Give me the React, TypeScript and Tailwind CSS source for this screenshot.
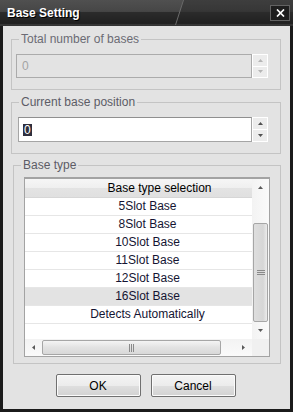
import React from 'react';

type Dir = 'up' | 'down' | 'left' | 'right';

const Tri: React.FC<{ dir: Dir; color: string }> = ({ dir, color }) => {
  const horiz = dir === 'up' || dir === 'down';
  const pts = {
    up: '0,3 2.5,0 5,3',
    down: '0,0 5,0 2.5,3',
    left: '3,0 3,5 0,2.5',
    right: '0,0 0,5 3,2.5',
  }[dir];
  return (
    <svg width={horiz ? 5 : 3} height={horiz ? 3 : 5} viewBox={horiz ? '0 0 5 3' : '0 0 3 5'}>
      <polygon points={pts} fill={color} />
    </svg>
  );
};

const Spin: React.FC<{ color: string; h: string }> = ({ color, h }) => (
  <div className={`flex w-[16px] flex-col border border-white bg-[#ececec] ${h}`}>
    <div className="flex flex-1 items-center justify-center border-b border-white">
      <Tri dir="up" color={color} />
    </div>
    <div className="flex flex-1 items-center justify-center">
      <Tri dir="down" color={color} />
    </div>
  </div>
);

const Btn: React.FC<{ label: string }> = ({ label }) => (
  <button className="h-[23px] w-[85px] rounded-[2px] border border-[#707070] bg-[linear-gradient(to_bottom,#f4f4f4_0%,#ececec_50%,#dfdfdf_51%,#d2d2d2_100%)] text-[12px] leading-none text-black shadow-[inset_0_0_0_1px_#fbfbfb]">
    {label}
  </button>
);

const rows = ['5Slot Base', '8Slot Base', '10Slot Base', '11Slot Base', '12Slot Base', '16Slot Base', 'Detects Automatically'];

const App: React.FC = () => {
  return (
    <div className="flex h-[412px] w-[293px] flex-col bg-[#1b1b1b] font-['Liberation_Sans',Arial,sans-serif] text-[12px]">
      {/* title bar */}
      <div className="relative flex h-[26px] items-start justify-between bg-[linear-gradient(to_bottom,#505050_0%,#464646_44%,#2b2b2b_48%,#202020_90%,#3e3e3e_96%,#2a2a2a_100%)]">
        <svg className="absolute left-0 top-0" width="293" height="26">
          <polygon points="183,0 293,0 293,12 180,12" fill="#000" fillOpacity="0.22" />
          <line x1="183.5" y1="0" x2="175.5" y2="25" stroke="#6a6a6a" strokeWidth="1" />
        </svg>
        <span className="relative pl-[7px] pt-[6px] font-bold leading-[14px] text-white [text-shadow:1px_1px_0_#000]">
          Base Setting
        </span>
        <button className="relative mr-[3px] mt-[5px] flex h-[16px] w-[20px] items-center justify-center border border-[#626262] bg-[#1e1e1e]">
          <svg width="9" height="8" viewBox="0 0 9 8">
            <path d="M1 0.5 L8 7.5 M8 0.5 L1 7.5" stroke="#fff" strokeWidth="1.7" />
          </svg>
        </button>
      </div>

      {/* body */}
      <div className="mx-[3px] mb-[3px] flex flex-1 flex-col bg-[#e3e3e3] pl-[8px] pr-[9px] pt-[6px]">
        <fieldset className="border border-[#c4c4c4] pb-[11px] pt-[8px]">
          <legend className="ml-[7px] px-[2px] leading-[14px] text-[#6b6b74]">Total number of bases</legend>
          <div className="ml-[4px] flex h-[24px]">
            <div className="flex w-[236px] items-center border border-[#ababab] bg-[#e3e3e3] pl-[5px] text-[#a3a3a3]">0</div>
            <Spin color="#b5b5b5" h="h-[24px]" />
          </div>
        </fieldset>

        <fieldset className="mt-[5px] border border-[#c4c4c4] pb-[11px] pt-[8px]">
          <legend className="ml-[7px] px-[2px] leading-[14px] text-[#5c5c66]">Current base position</legend>
          <div className="ml-[6px] flex h-[25px]">
            <div className="flex w-[234px] items-center border border-[#a5a5a5] border-t-[#8f8f8f] bg-white pl-[4px]">
              <span className="bg-[#2e2e3c] px-[1px] leading-[12px] text-white">0</span>
            </div>
            <Spin color="#505050" h="h-[25px]" />
          </div>
        </fieldset>

        <fieldset className="ml-[2px] mt-[4px] border border-[#c4c4c4] pb-[6px] pt-[5px]">
          <legend className="ml-[7px] px-[2px] leading-[14px] text-[#5c5c66]">Base type</legend>
          <div className="ml-[10px] grid h-[180px] w-[246px] grid-cols-[227px_17px] grid-rows-[1fr_17px] border border-t-2 border-[#a3a3a3] bg-white">
            {/* rows */}
            <div className="overflow-hidden">
              <div className="w-[245px] text-[#141432]">
                <div className="h-[19px] border-b border-[#d6d6d6] bg-[linear-gradient(to_bottom,#f6f6f6_0%,#efefef_50%,#e3e3e3_51%,#e0e0e0_100%)] pl-[24px] text-center leading-[19px] text-black">
                  Base type selection
                </div>
                {rows.map((r, i) => (
                  <div
                    key={r}
                    className={`h-[18px] border-b border-[#e6e6e6] text-center leading-[17px] ${i === 5 ? 'bg-[#e3e3e3]' : 'bg-white'}`}
                  >
                    {r}
                  </div>
                ))}
              </div>
            </div>

            {/* vertical scrollbar */}
            <div className="flex flex-col bg-[linear-gradient(to_right,#f3f3f3,#fafafa)]">
              <div className="flex h-[17px] items-center justify-center">
                <Tri dir="up" color="#5a5a5a" />
              </div>
              <div className="flex flex-1 flex-col pt-[27px]">
                <div className="mx-[1px] flex flex-1 flex-col items-center justify-center gap-[1px] rounded-[2px] border border-[#a6a6a6] bg-[linear-gradient(to_right,#dedede,#d6d6d6_70%,#ececec)]">
                  <div className="h-px w-[8px] bg-[#8a8a8a]" />
                  <div className="h-px w-[8px] bg-[#8a8a8a]" />
                  <div className="h-px w-[8px] bg-[#8a8a8a]" />
                </div>
              </div>
              <div className="flex h-[17px] items-center justify-center">
                <Tri dir="down" color="#5a5a5a" />
              </div>
            </div>

            {/* horizontal scrollbar */}
            <div className="flex bg-[linear-gradient(to_bottom,#f3f3f3,#fafafa)]">
              <div className="flex w-[17px] items-center justify-center">
                <Tri dir="left" color="#5a5a5a" />
              </div>
              <div className="flex flex-1 py-[1px]">
                <div className="flex w-[179px] items-center justify-center gap-[1px] rounded-[2px] border border-[#a6a6a6] bg-[linear-gradient(to_bottom,#f4f4f4,#e2e2e2_50%,#d8d8d8)]">
                  <div className="h-[8px] w-px bg-[#8a8a8a]" />
                  <div className="h-[8px] w-px bg-[#8a8a8a]" />
                  <div className="h-[8px] w-px bg-[#8a8a8a]" />
                </div>
              </div>
              <div className="flex w-[17px] items-center justify-center">
                <Tri dir="right" color="#5a5a5a" />
              </div>
            </div>
            <div className="bg-[#f0f0f0]" />
          </div>
        </fieldset>

        <div className="mt-[10px] flex justify-center gap-[10px] pr-[1px]">
          <Btn label="OK" />
          <Btn label="Cancel" />
        </div>
      </div>
    </div>
  );
};

export default App;
